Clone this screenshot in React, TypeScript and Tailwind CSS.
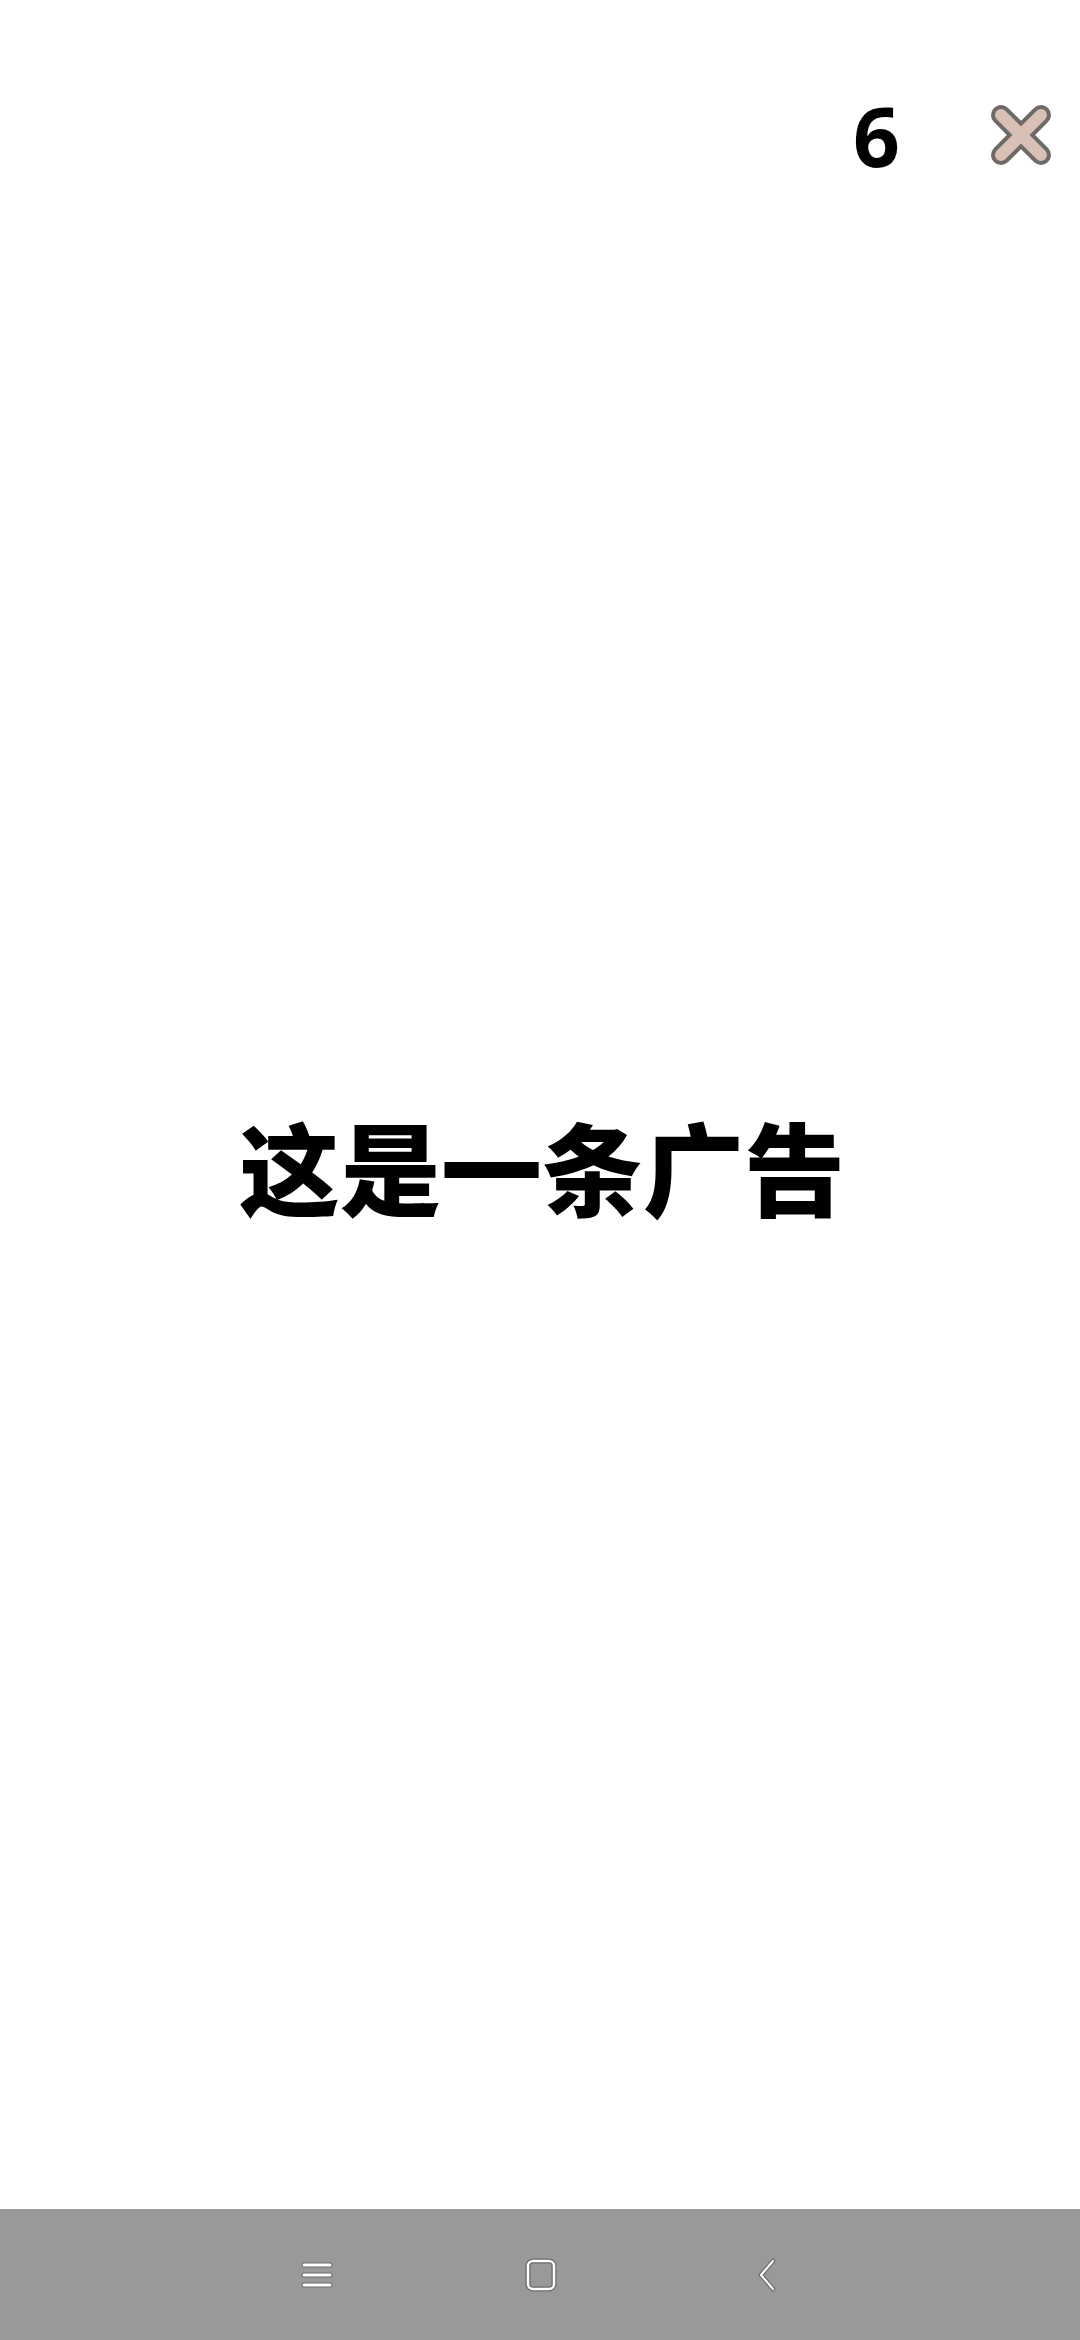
import React from 'react';

const CloseIcon = () => (
  <svg width="62" height="62" viewBox="0 0 62 62">
    <g strokeLinecap="round">
      <line x1="11" y1="11" x2="51" y2="51" stroke="#6e6a68" strokeWidth="20" />
      <line x1="51" y1="11" x2="11" y2="51" stroke="#6e6a68" strokeWidth="20" />
      <line x1="11" y1="11" x2="51" y2="51" stroke="#d8c0b4" strokeWidth="12" />
      <line x1="51" y1="11" x2="11" y2="51" stroke="#d8c0b4" strokeWidth="12" />
    </g>
  </svg>
);

const NavIcons = () => (
  <div className="flex h-[131px] items-center justify-center bg-[#999999]">
    {/* recent apps */}
    <svg width="40" height="40" viewBox="0 0 40 40" className="ml-[4px]">
      <g stroke="#6a6a6a" strokeWidth="5" strokeLinecap="round">
        <line x1="7" y1="10" x2="33" y2="10" />
        <line x1="7" y1="20" x2="33" y2="20" />
        <line x1="7" y1="30" x2="33" y2="30" />
      </g>
      <g stroke="#ffffff" strokeWidth="3" strokeLinecap="round">
        <line x1="7" y1="10" x2="33" y2="10" />
        <line x1="7" y1="20" x2="33" y2="20" />
        <line x1="7" y1="30" x2="33" y2="30" />
      </g>
    </svg>
    {/* home */}
    <svg width="40" height="40" viewBox="0 0 40 40" className="ml-[184px]">
      <rect x="7" y="6" width="26" height="28" rx="5" fill="none" stroke="#6a6a6a" strokeWidth="5" />
      <rect x="7" y="6" width="26" height="28" rx="5" fill="none" stroke="#ffffff" strokeWidth="2.5" />
    </svg>
    {/* back */}
    <svg width="40" height="40" viewBox="0 0 40 40" className="ml-[186px]">
      <polyline points="26,6 14,20 26,34" fill="none" stroke="#6a6a6a" strokeWidth="4.5" strokeLinecap="round" strokeLinejoin="round" />
      <polyline points="26,6 14,20 26,34" fill="none" stroke="#ffffff" strokeWidth="2.2" strokeLinecap="round" strokeLinejoin="round" />
    </svg>
  </div>
);

export default function App() {
  return (
    <div className="flex h-[2340px] w-[1080px] flex-col bg-white">
      <div className="flex h-[270px] items-start justify-end pr-[28px] pt-[94px]">
        <span className="font-['Noto_Sans',sans-serif] text-[82px] font-bold leading-none text-black">6</span>
        <div className="ml-[90px] mt-[10px]">
          <CloseIcon />
        </div>
      </div>
      <div className="flex flex-1 items-center justify-center pb-[148px] pl-[4px]">
        <h1 className="font-['Noto_Sans_CJK_SC',sans-serif] text-[101px] font-black leading-none text-black">
          这是一条广告
        </h1>
      </div>
      <NavIcons />
    </div>
  );
}
